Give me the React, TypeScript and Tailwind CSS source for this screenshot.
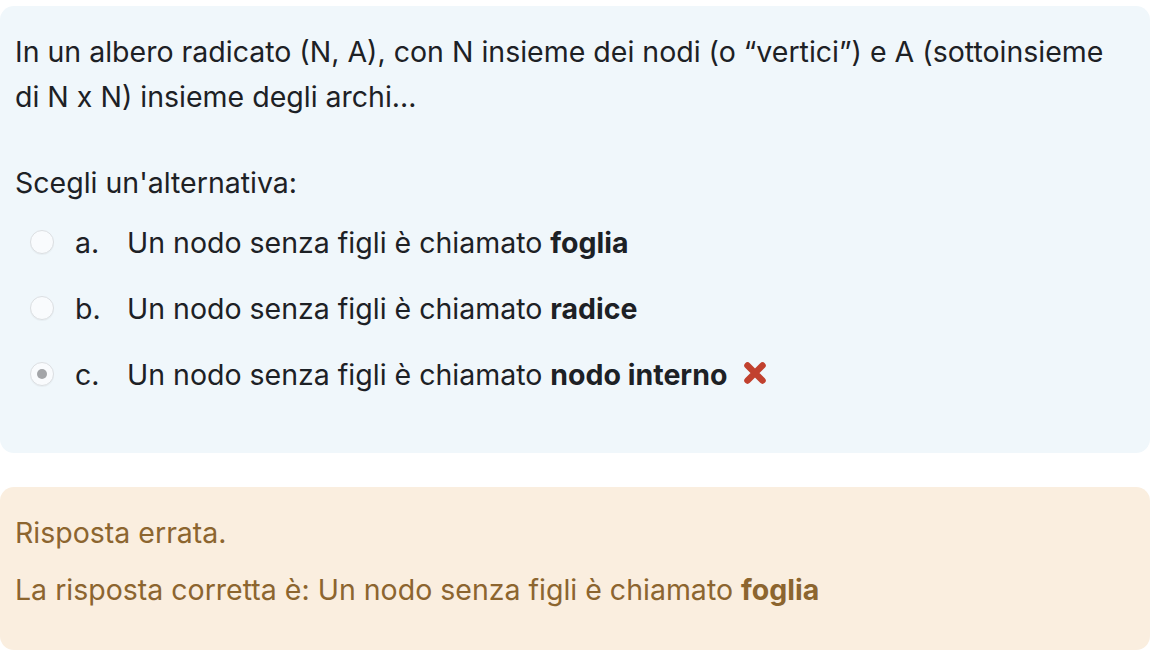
import { FunctionComponent } from 'react';

interface OptionProps {
  letter: string;
  answer: string;
  checked?: boolean;
  wrong?: boolean;
}

const Option: FunctionComponent<OptionProps> = ({ letter, answer, checked, wrong }: OptionProps) => {
  return (
    <div className="flex items-center h-[66px]">
      <span className="ml-[30px] w-[24px] h-[24px] rounded-full border border-[#dcdfe2] bg-[#f9fbfd] shadow-[0_1px_1px_rgba(0,0,0,0.04)] flex items-center justify-center">
        {checked && <span className="w-[10px] h-[10px] rounded-full bg-[#a3a5a8]" />}
      </span>
      <span className="ml-[21px] w-[52px]">{letter}</span>
      <span>
        Un nodo senza figli è chiamato <b className="font-bold">{answer}</b>
      </span>
      {wrong && (
        <svg className="ml-[17px] -mt-[2px]" width="22" height="22" viewBox="0 0 22 22">
          <path d="M3.5 3.5 L18.5 18.5 M18.5 3.5 L3.5 18.5" stroke="#c1412e" strokeWidth="6.5" strokeLinecap="round" />
        </svg>
      )}
    </div>
  );
};

export default function App() {
  return (
    <div className="w-[1156px] h-[664px] bg-white pt-[6px] text-[28.5px] leading-[45px] text-[#1d2125]" style={{ fontFamily: 'Inter, "Noto Sans", sans-serif' }}>
      <div className="w-[1150px] h-[447px] rounded-[14px] bg-[#f0f7fb] pt-[23px] pl-[15px] pr-[20px]">
        <p>
          In un albero radicato (N, A), con N insieme dei nodi (o “vertici”) e A (sottoinsieme di N x N) insieme degli archi...
        </p>
        <p className="mt-[41px]">Scegli un'alternativa:</p>
        <div className="mt-[4px] -ml-[15px]">
          <Option letter="a." answer="foglia" />
          <Option letter="b." answer="radice" />
          <Option letter="c." answer="nodo interno" checked wrong />
        </div>
      </div>
      <div className="mt-[34px] w-[1150px] h-[163px] rounded-[14px] bg-[#faeedf] pt-[23px] pl-[15px] text-[#8c652f]">
        <p>Risposta errata.</p>
        <p className="mt-[12px]">
          La risposta corretta è: Un nodo senza figli è chiamato <b className="font-bold">foglia</b>
        </p>
      </div>
    </div>
  );
}
